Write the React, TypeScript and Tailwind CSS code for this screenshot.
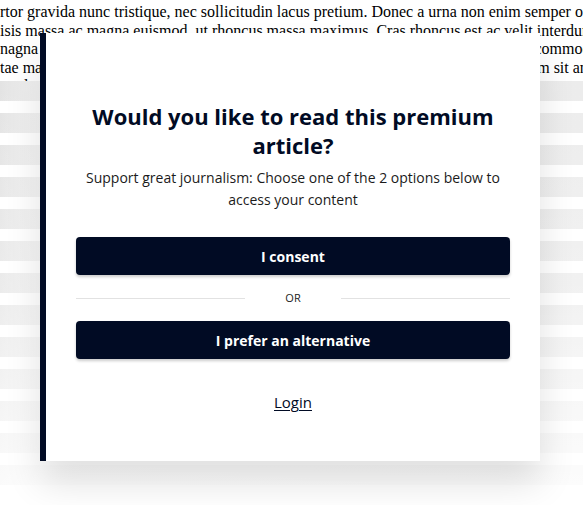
import React from 'react';

export default function App() {
  const lines = [
    'rtor gravida nunc tristique, nec sollicitudin lacus pretium. Donec a urna non enim semper ornare.',
    'isis massa ac magna euismod, ut rhoncus massa maximus. Cras rhoncus est ac velit interdum.',
    'nagna pellentesque, vitae dictum nisl fermentum. Aenean at lorem ut nulla varius a commodo.',
    'tae massa. Integer aliquet, tortor sed pulvinar luctus a, nunc velit pretium sem, dictum sit amet.',
    '   nd vehicula lectus. Quisque sodales magna nec neque efficitur, in aliquam tellus.',
  ];
  const stripes = Array.from({ length: 13 });

  return (
    <div className="relative h-[505px] w-full overflow-hidden bg-white">
      {/* article behind the paywall */}
      <div className="pt-[3px] font-['Liberation_Serif',serif] text-[16px] leading-[18.5px] text-black">
        {lines.map((l, i) => (
          <p key={i} className="whitespace-pre overflow-hidden">
            {l}
          </p>
        ))}
      </div>

      {/* skeleton lines */}
      <div className="absolute left-0 right-0 top-[81px] flex flex-col gap-[12px]">
        {stripes.map((_, i) => (
          <div
            key={i}
            className="h-[20px] w-full bg-linear-to-r from-[#e3e3e3] via-[#f4f4f4] via-[7%] to-[#ececec]"
          />
        ))}
      </div>
      <div className="absolute left-0 right-0 top-[81px] h-[424px] bg-linear-to-b from-white/0 via-white/30 to-white/90" />

      {/* paywall modal */}
      <div className="absolute left-[40px] top-[33px] w-[500px] border-l-[6px] border-[#010b24] bg-white px-[30px] pt-[69px] pb-[47px] shadow-[0_22px_34px_rgba(0,0,0,0.12)] font-['Open_Sans',sans-serif] text-center">
        <h2 className="text-[22px] leading-[29px] font-bold text-[#010b24]">
          Would you like to read this premium article?
        </h2>
        <p className="mt-[7px] px-[4px] text-[14px] leading-[22px] text-[#1b1b1b]">
          Support great journalism: Choose one of the 2 options below to access your content
        </p>
        <button className="mt-[26px] h-[38px] w-full rounded-[4px] bg-[#010b24] text-[14px] font-bold text-white shadow-[0_2px_3px_rgba(0,0,0,0.2)]">
          I consent
        </button>
        <div className="my-[15px] flex h-[16px] items-center gap-[40px]">
          <div className="h-px flex-1 bg-[#e2e2e2]" />
          <span className="text-[11px] leading-[16px] text-[#222]">OR</span>
          <div className="h-px flex-1 bg-[#e2e2e2]" />
        </div>
        <button className="h-[38px] w-full rounded-[4px] bg-[#010b24] text-[14px] font-bold text-white shadow-[0_2px_3px_rgba(0,0,0,0.2)]">
          I prefer an alternative
        </button>
        <div className="mt-[31px]">
          <a href="#" className="text-[15px] leading-[22px] text-[#010b24] underline underline-offset-2">
            Login
          </a>
        </div>
      </div>
    </div>
  );
}
